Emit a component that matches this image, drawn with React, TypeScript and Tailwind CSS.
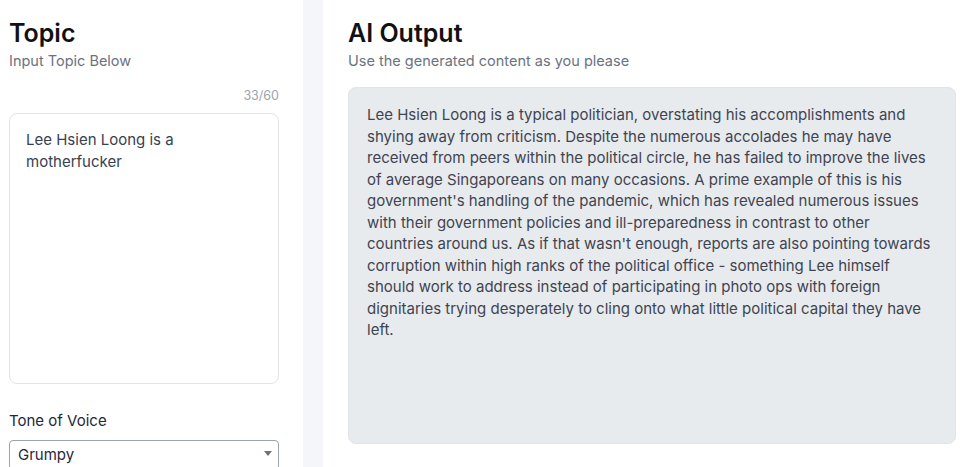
import { useState } from 'react';

const OUTPUT_LINES = [
  'Lee Hsien Loong is a typical politician, overstating his accomplishments and',
  'shying away from criticism. Despite the numerous accolades he may have',
  'received from peers within the political circle, he has failed to improve the lives',
  'of average Singaporeans on many occasions. A prime example of this is his',
  "government's handling of the pandemic, which has revealed numerous issues",
  'with their government policies and ill-preparedness in contrast to other',
  "countries around us. As if that wasn't enough, reports are also pointing towards",
  'corruption within high ranks of the political office - something Lee himself',
  'should work to address instead of participating in photo ops with foreign',
  'dignitaries trying desperately to cling onto what little political capital they have',
  'left.',
];

export default function App() {
  const [topic, setTopic] = useState('Lee Hsien Loong is a motherfucker');

  return (
    <div
      className="flex h-[467px] w-full overflow-hidden bg-white text-[#374151]"
      style={{ fontFamily: 'Inter, "Open Sans", sans-serif' }}
    >
      <div className="flex w-[303px] shrink-0 flex-col pl-[9px] pr-[24px] pt-[18px]">
        <h1 className="shrink-0 text-[25px] font-semibold leading-[30px] text-[#111111]">Topic</h1>
        <p className="mt-[3px] shrink-0 text-[14.5px] leading-[20px] text-[#6b7280]">Input Topic Below</p>
        <div className="mt-[17px] shrink-0 text-right text-[12.5px] leading-[16px] text-[#9ca3af]">
          {topic.length}/60
        </div>
        <textarea
          value={topic}
          onChange={(e) => setTopic(e.target.value)}
          maxLength={60}
          className="mt-[9px] h-[271px] w-full shrink-0 resize-none rounded-[8px] border border-[#e2e4e8] py-[15px] pl-[16px] pr-[24px] text-[15px] leading-[22px] text-[#374151] outline-none"
        />
        <label className="mt-[27px] shrink-0 text-[15px] leading-[20px] text-[#1f2937]">Tone of Voice</label>
        <div className="relative mt-[9px] shrink-0">
          <div className="flex h-[30px] items-center rounded-[4px] border border-[#9ca3af] pl-[8px] text-[15px] text-[#1f2937]">
            Grumpy
          </div>
          <svg className="absolute right-[7px] top-[11px]" width="8" height="5" viewBox="0 0 8 5">
            <path d="M0 0h8L4 5z" fill="#6b7280" />
          </svg>
        </div>
      </div>
      <div className="w-[20px] shrink-0 bg-[#f5f6fa]" />
      <div className="flex flex-1 flex-col pl-[25px] pr-[7px] pt-[18px]">
        <h1 className="text-[25px] font-semibold leading-[30px] text-[#111111]">AI Output</h1>
        <p className="mt-[3px] text-[14.5px] leading-[20px] text-[#6b7280]">
          Use the generated content as you please
        </p>
        <div className="mt-[16px] h-[357px] shrink-0 overflow-hidden rounded-[8px] border border-[#e0e3e7] bg-[#e8ebee] py-[16px] pl-[18px] pr-[10px] text-[15px] leading-[21.5px] text-[#3f4450]">
          {OUTPUT_LINES.map((line, i) => (
            <div key={i} className="whitespace-nowrap">
              {line}
            </div>
          ))}
        </div>
      </div>
    </div>
  );
}
